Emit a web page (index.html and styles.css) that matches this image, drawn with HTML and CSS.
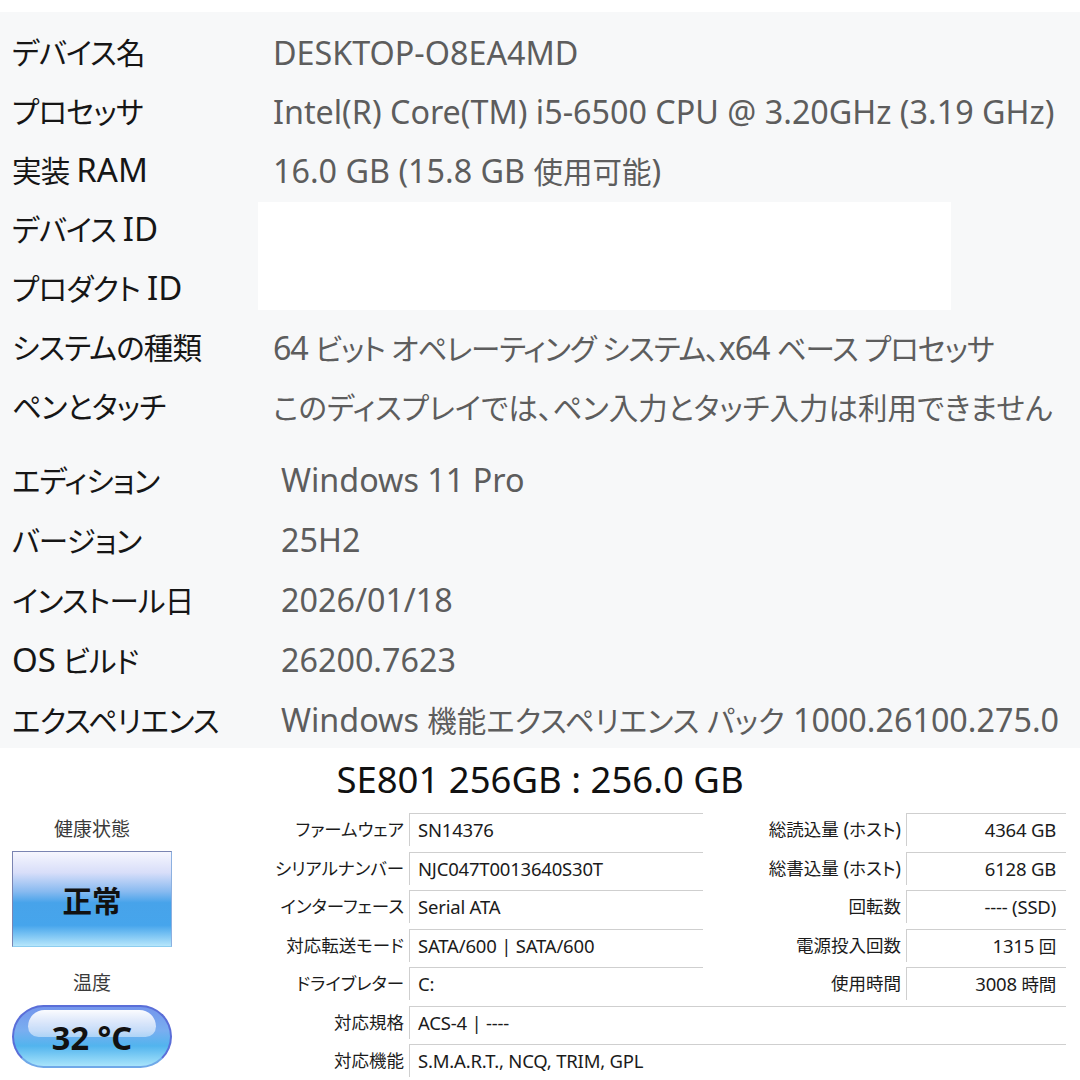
FILE: index.html
```html
<!DOCTYPE html>
<html lang="ja">
<head>
    <meta charset="UTF-8">
    <title>システム情報</title>
    <link rel="stylesheet" href="styles.css">
</head>
<body>
    <div class="spec-panel">
        <div class="spec-group">
            <div class="spec-row"><span class="spec-label">デバイス名</span><span class="spec-value">DESKTOP-O8EA4MD</span></div>
            <div class="spec-row"><span class="spec-label">プロセッサ</span><span class="spec-value">Intel(R) Core(TM) i5-6500 CPU @ 3.20GHz (3.19 GHz)</span></div>
            <div class="spec-row"><span class="spec-label">実装 <span class="lat">RAM</span></span><span class="spec-value">16.0 GB (15.8 GB <span class="ja">使用可能</span>)</span></div>
            <div class="spec-row hidden-ids">
                <div class="id-labels">
                    <span class="spec-label">デバイス <span class="lat">ID</span></span>
                    <span class="spec-label">プロダクト <span class="lat">ID</span></span>
                </div>
                <div class="masked"></div>
            </div>
            <div class="spec-row"><span class="spec-label">システムの種類</span><span class="spec-value tight">64 <span class="ja">ビット オペレーティング システム、</span>x64 <span class="ja">ベース プロセッサ</span></span></div>
            <div class="spec-row"><span class="spec-label">ペンとタッチ</span><span class="spec-value"><span class="ja">このディスプレイでは、ペン入力とタッチ入力は利用できません</span></span></div>
        </div>
        <div class="spec-group windows">
            <div class="spec-row"><span class="spec-label">エディション</span><span class="spec-value">Windows 11 Pro</span></div>
            <div class="spec-row"><span class="spec-label">バージョン</span><span class="spec-value">25H2</span></div>
            <div class="spec-row"><span class="spec-label">インストール日</span><span class="spec-value">2026/01/18</span></div>
            <div class="spec-row"><span class="spec-label"><span class="lat">OS</span> ビルド</span><span class="spec-value">26200.7623</span></div>
            <div class="spec-row"><span class="spec-label">エクスペリエンス</span><span class="spec-value">Windows <span class="ja">機能エクスペリエンス パック</span> 1000.26100.275.0</span></div>
        </div>
    </div>

    <div class="disk">
        <h1 class="disk-title">SE801 256GB : 256.0 GB</h1>
        <div class="disk-body">
            <div class="status-col">
                <div class="status-caption">健康状態</div>
                <div class="health-box">正常</div>
                <div class="status-caption temp-caption">温度</div>
                <div class="temp-pill"><span>32 °C</span></div>
            </div>
            <div class="disk-table">
                <span class="cell-label">ファームウェア</span><span class="cell-box">SN14376</span>
                <span class="cell-label">総読込量 <span class="lat">(</span>ホスト<span class="lat">)</span></span><span class="cell-box num">4364 GB</span>

                <span class="cell-label">シリアルナンバー</span><span class="cell-box">NJC047T0013640S30T</span>
                <span class="cell-label">総書込量 <span class="lat">(</span>ホスト<span class="lat">)</span></span><span class="cell-box num">6128 GB</span>

                <span class="cell-label">インターフェース</span><span class="cell-box">Serial ATA</span>
                <span class="cell-label">回転数</span><span class="cell-box num">---- (SSD)</span>

                <span class="cell-label">対応転送モード</span><span class="cell-box">SATA/600 | SATA/600</span>
                <span class="cell-label">電源投入回数</span><span class="cell-box num">1315 <span class="ja">回</span></span>

                <span class="cell-label">ドライブレター</span><span class="cell-box">C:</span>
                <span class="cell-label">使用時間</span><span class="cell-box num">3008 <span class="ja">時間</span></span>

                <span class="cell-label">対応規格</span><span class="cell-box wide">ACS-4 | ----</span>

                <span class="cell-label">対応機能</span><span class="cell-box wide">S.M.A.R.T., NCQ, TRIM, GPL</span>
            </div>
        </div>
    </div>
</body>
</html>
```

FILE: styles.css
```css
* {
    margin: 0;
    padding: 0;
    box-sizing: border-box;
}

body {
    width: 1080px;
    height: 1080px;
    overflow: hidden;
    background: #ffffff;
    font-family: "Noto Sans", "Noto Sans CJK JP", sans-serif;
    font-feature-settings: "palt";
    color: #1b1b1b;
    padding-top: 12px;
}

/* settings page part */
.spec-panel {
    background: #f7f8f9;
    padding: 10px 0 0 12px;
    height: 736px;
}

.spec-row {
    display: flex;
    align-items: center;
    height: 59px;
    font-size: 29.5px;
}

.spec-label {
    width: 261px;
    flex-shrink: 0;
    color: #161616;
    letter-spacing: -0.8px;
    white-space: nowrap;
}

.spec-label .lat {
    font-size: 33px;
    letter-spacing: 0;
}

.spec-value {
    color: #5d5d5d;
    font-size: 32.3px;
    white-space: nowrap;
}

.spec-value .ja {
    font-size: 29.5px;
}

.spec-value.tight {
    letter-spacing: -1.1px;
}

.hidden-ids {
    height: 118px;
}

.id-labels {
    display: flex;
    flex-direction: column;
    width: 246px;
    flex-shrink: 0;
}

.id-labels .spec-label {
    height: 59px;
    line-height: 59px;
}

.masked {
    width: 693px;
    height: 108px;
    margin-top: -4px;
    background: #ffffff;
}

.spec-group.windows {
    margin-top: 14px;
}

.windows .spec-row {
    height: 60px;
}

.windows .spec-label {
    width: 269px;
}

/* CrystalDiskInfo part */
.disk-title {
    font-size: 36.5px;
    font-weight: 400;
    text-align: center;
    color: #111;
    height: 60px;
    line-height: 62px;
}

.disk-body {
    display: flex;
}

.status-col {
    width: 192px;
    padding-left: 12px;
    display: flex;
    flex-direction: column;
}

.status-caption {
    width: 160px;
    text-align: center;
    font-size: 19px;
    color: #3a3a3a;
    height: 32px;
    line-height: 32px;
    margin-top: 5px;
}

.temp-caption {
    margin-top: 20px;
}

.health-box {
    width: 160px;
    height: 96px;
    margin-top: 6px;
    border: 1px solid #7a84b2;
    border-bottom-color: #8ccdf0;
    border-right-color: #8cb0e0;
    background: linear-gradient(#f6f6fe 0%, #d8def9 22%, #88baf0 42%, #47a3ea 54%, #46a5ec 78%, #b6e6fb 100%);
    display: flex;
    align-items: center;
    justify-content: center;
    font-size: 29.5px;
    font-weight: 700;
    color: #111;
}

.temp-pill {
    position: relative;
    width: 160px;
    height: 63px;
    margin-top: 6px;
    border-radius: 32px;
    border: 2px solid #5a6ed8;
    border-bottom-color: #6fa8e8;
    background: linear-gradient(#7496ec 0%, #79aef0 40%, #52b4ee 66%, #a8e4fb 100%);
    display: flex;
    align-items: center;
    justify-content: center;
    font-size: 32.5px;
    font-weight: 700;
    color: #111;
    overflow: hidden;
}

/* glossy highlight over the top half */
.temp-pill::before {
    content: "";
    position: absolute;
    left: 14px;
    right: 14px;
    top: 3px;
    height: 27px;
    border-radius: 22px 22px 14px 14px;
    background: linear-gradient(rgba(255, 255, 255, 0.97), rgba(255, 255, 255, 0.45));
}

.temp-pill span {
    position: relative;
    z-index: 1;
    margin-top: 2px;
}

.disk-table {
    display: grid;
    grid-template-columns: 217px 294px 203px 160px;
    grid-auto-rows: 33px;
    row-gap: 5.5px;
    margin-top: 5px;
    font-size: 17.5px;
    color: #1b1b1b;
}

.cell-label {
    text-align: right;
    padding-right: 5px;
    line-height: 33px;
    white-space: nowrap;
}

.cell-label .lat {
    font-size: 19px;
}

.cell-box {
    border-top: 1px solid #cfcfcf;
    border-left: 1px solid #cfcfcf;
    padding-left: 8px;
    line-height: 31px;
    font-size: 18.5px;
    letter-spacing: -0.2px;
    white-space: nowrap;
}

.cell-box .ja {
    font-size: 17.5px;
}

.cell-box.num {
    text-align: right;
    padding-right: 10px;
}

.cell-box.wide {
    grid-column: 2 / 5;
}
```
